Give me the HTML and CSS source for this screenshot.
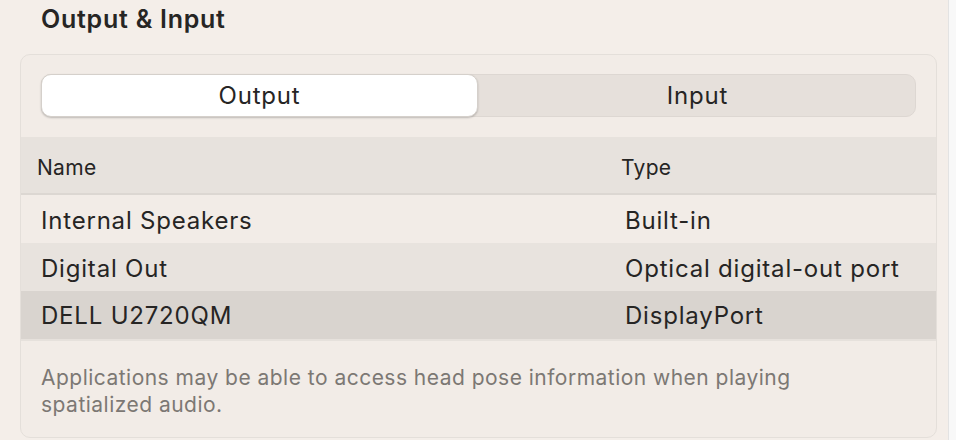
FILE: index.html
```html
<!DOCTYPE html>
<html>
<head>
<meta charset="utf-8">
<link rel="stylesheet" href="styles.css">
</head>
<body>
<div class="window">
  <main class="main">
    <h1 class="title">Output &amp; Input</h1>
    <section class="card">
      <div class="segmented">
        <div class="seg seg-active">Output</div>
        <div class="seg">Input</div>
      </div>
      <div class="table">
        <div class="thead">
          <div class="cell">Name</div>
          <div class="cell">Type</div>
        </div>
        <div class="row">
          <div class="cell">Internal Speakers</div>
          <div class="cell">Built-in</div>
        </div>
        <div class="row row-alt">
          <div class="cell">Digital Out</div>
          <div class="cell">Optical digital-out port</div>
        </div>
        <div class="row row-selected">
          <div class="cell">DELL U2720QM</div>
          <div class="cell">DisplayPort</div>
        </div>
      </div>
      <p class="note">Applications may be able to access head pose information when playing spatialized audio.</p>
    </section>
  </main>
  <aside class="scroll-edge"></aside>
</div>
</body>
</html>
```

FILE: styles.css
```css
* { box-sizing: border-box; }
html, body {
  margin: 0;
  padding: 0;
  background: #f4eee9;
  font-family: Inter, "Noto Sans", "Liberation Sans", sans-serif;
  color: #262524;
}
.window {
  display: flex;
  width: 956px;
  height: 440px;
  overflow: hidden;
}
.main {
  flex: 1;
  padding: 0 11px 0 20px;
}
.scroll-edge {
  width: 8px;
  background: #f8f8f8;
  border-left: 1px solid #e3e3e3;
}
.title {
  margin: 0;
  height: 54px;
  padding: 2px 0 0 21px;
  font-size: 25px;
  font-weight: 600;
  line-height: 34px;
  letter-spacing: 0.75px;
  color: #262524;
}
.card {
  background: #f2ece7;
  border: 1px solid #e4dfda;
  border-radius: 10px;
  height: 384px;
  overflow: hidden;
}
.segmented {
  display: flex;
  margin: 19px 20px 0 20px;
  height: 43px;
  background: #e6e0db;
  border: 1px solid #ddd7d2;
  border-radius: 10px;
}
.seg {
  flex: 1;
  display: flex;
  align-items: center;
  justify-content: center;
  font-size: 24px;
  letter-spacing: 0.8px;
  color: #262524;
}
.seg-active {
  margin: -1px 2px -1px -1px;
  background: #ffffff;
  border-radius: 10px;
  border: 1px solid #d5d0cb;
  box-shadow: 0 1px 2px rgba(0,0,0,0.22);
}
.table {
  margin-top: 20px;
}
.thead, .row {
  display: grid;
  grid-template-columns: 584px 1fr;
  align-items: center;
}
.thead {
  height: 58px;
  padding-left: 16px;
  background: #e7e2dd;
  border-bottom: 2px solid #dcd7d2;
  font-size: 21px;
  letter-spacing: 0.3px;
  padding-top: 5px;
}
.row {
  height: 48px;
  padding-left: 20px;
  padding-top: 3px;
  font-size: 24px;
  letter-spacing: 0.8px;
}
.row-alt { background: #e8e3de; }
.row-selected {
  background: #d9d4cf;
  border-bottom: 2px solid #e6e1dc;
  height: 50px;
  padding-bottom: 2px;
}
.note {
  margin: 0;
  padding: 23px 20px 0 20px;
  font-size: 21px;
  line-height: 27px;
  letter-spacing: 0.48px;
  color: #7c7874;
  max-width: 860px;
}
```
